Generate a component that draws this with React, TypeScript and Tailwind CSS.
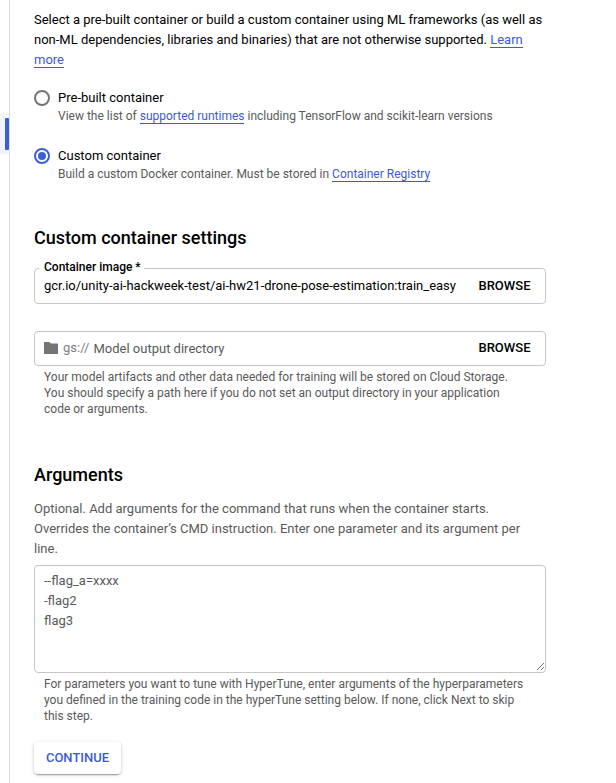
import React from "react";

function Radio({ on }: { on?: boolean }) {
  return (
    <span className={`flex size-4 shrink-0 items-center justify-center rounded-full border-2 ${on ? "border-[#3c5fd6]" : "border-[#757575]"}`}>
      {on && <span className="size-2 rounded-full bg-[#3c5fd6]" />}
    </span>
  );
}

function Link({ children }: { children: React.ReactNode }) {
  return <a className="border-b border-[#3c5bd2] text-[#3c5bd2]">{children}</a>;
}

export default function App() {
  return (
    <div className="flex h-[783px] w-[616px] overflow-hidden bg-white font-['Roboto',sans-serif] text-[#202124]">
      <aside className="w-[10px] shrink-0 border-r border-[#dcdcdc] pt-[114px]">
        <div className="flex h-10 items-center justify-end bg-[#f0f4ff]">
          <div className="h-8 w-1 rounded-[1px] bg-[#3c5fd6]" />
        </div>
      </aside>
      <main className="ml-6 w-[512px] shrink-0 pt-[10px] whitespace-nowrap">
        <p className="text-[13px] leading-5 text-black">
          Select a pre-built container or build a custom container using ML frameworks (as well as<br />
          non-ML dependencies, libraries and binaries) that are not otherwise supported. <Link>Learn</Link><br />
          <Link>more</Link>
        </p>
        <div className="mt-5 flex gap-2">
          <Radio />
          <div>
            <div className="text-[13px] leading-4 text-black">Pre-built container</div>
            <div className="mt-[2px] text-xs leading-4 text-[#5a5a5a]">View the list of <Link>supported runtimes</Link> including TensorFlow and scikit-learn versions</div>
          </div>
        </div>
        <div className="mt-6 flex gap-2">
          <Radio on />
          <div>
            <div className="text-[13px] leading-4 text-black">Custom container</div>
            <div className="mt-[2px] text-xs leading-4 text-[#5a5a5a]">Build a custom Docker container. Must be stored in <Link>Container Registry</Link></div>
          </div>
        </div>
        <h2 className="mt-11 text-lg leading-6 font-medium text-black">Custom container settings</h2>
        <div className="relative mt-[18px] flex h-9 items-center justify-between rounded border border-[#c6c6c6] pr-[14.5px] pl-[9px]">
          <span className="absolute -top-[9px] left-1 bg-white pr-[3px] pl-[5px] text-xs leading-[14px] font-medium text-black">Container image *</span>
          <span className="text-[13px] text-black">gcr.io/unity-ai-hackweek-test/ai-hw21-drone-pose-estimation:train_easy</span>
          <span className="text-[13px] font-medium text-black">BROWSE</span>
        </div>
        <div className="mt-[27px] flex h-[35px] items-center rounded border border-[#c6c6c6] pr-[14.5px] pl-[9px] text-[13px]">
          <svg className="mb-px h-3 w-[14px]" viewBox="0 0 14 12" fill="#757575"><path d="M.6 0H5.4L7 1.6h6.4a.6.6 0 0 1 .6.6v9.2a.6.6 0 0 1-.6.6H.6a.6.6 0 0 1-.6-.6V.6A.6.6 0 0 1 .6 0z" /></svg>
          <span className="ml-[5px] pb-px text-[#808080]">gs://</span>
          <span className="ml-1 text-[#5a5a5a]">Model output directory</span>
          <span className="ml-auto pb-[2px] font-medium text-black">BROWSE</span>
        </div>
        <p className="mt-[3px] ml-[10px] text-xs leading-4 text-[#5a5a5a]">
          Your model artifacts and other data needed for training will be stored on Cloud Storage.<br />
          You should specify a path here if you do not set an output directory in your application<br />
          code or arguments.
        </p>
        <h2 className="mt-[46px] text-lg leading-6 font-medium text-black">Arguments</h2>
        <p className="mt-3 text-[13px] leading-5 text-[#5a5a5a]">
          Optional. Add arguments for the command that runs when the container starts.<br />
          Overrides the container’s CMD instruction. Enter one parameter and its argument per<br />
          line.
        </p>
        <div className="mt-[6px] flex h-[108px] items-end justify-between rounded border border-[#c6c6c6] pl-[9px]">
          <div className="self-start pt-[5px] text-[13px] leading-5 text-[#5a5a5a]">--flag_a=xxxx<br />-flag2<br />flag3</div>
          <svg className="mr-px mb-[2px] size-[7px]" viewBox="0 0 7 7" stroke="#555" strokeWidth=".8"><path d="M0 7 7 0M4 7 7 4" /></svg>
        </div>
        <p className="mt-[3px] ml-[10px] text-xs leading-4 text-[#5a5a5a]">
          For parameters you want to tune with HyperTune, enter arguments of the hyperparameters<br />
          you defined in the training code in the hyperTune setting below. If none, click Next to skip<br />
          this step.
        </p>
        <button className="mt-[18px] h-8 w-[87px] rounded text-[13px] font-medium text-[#3c5bd2] shadow-[0_3px_1px_-2px_rgba(0,0,0,.2),0_1px_2px_rgba(0,0,0,.2),0_1px_5px_rgba(0,0,0,.12)]">CONTINUE</button>
      </main>
    </div>
  );
}
